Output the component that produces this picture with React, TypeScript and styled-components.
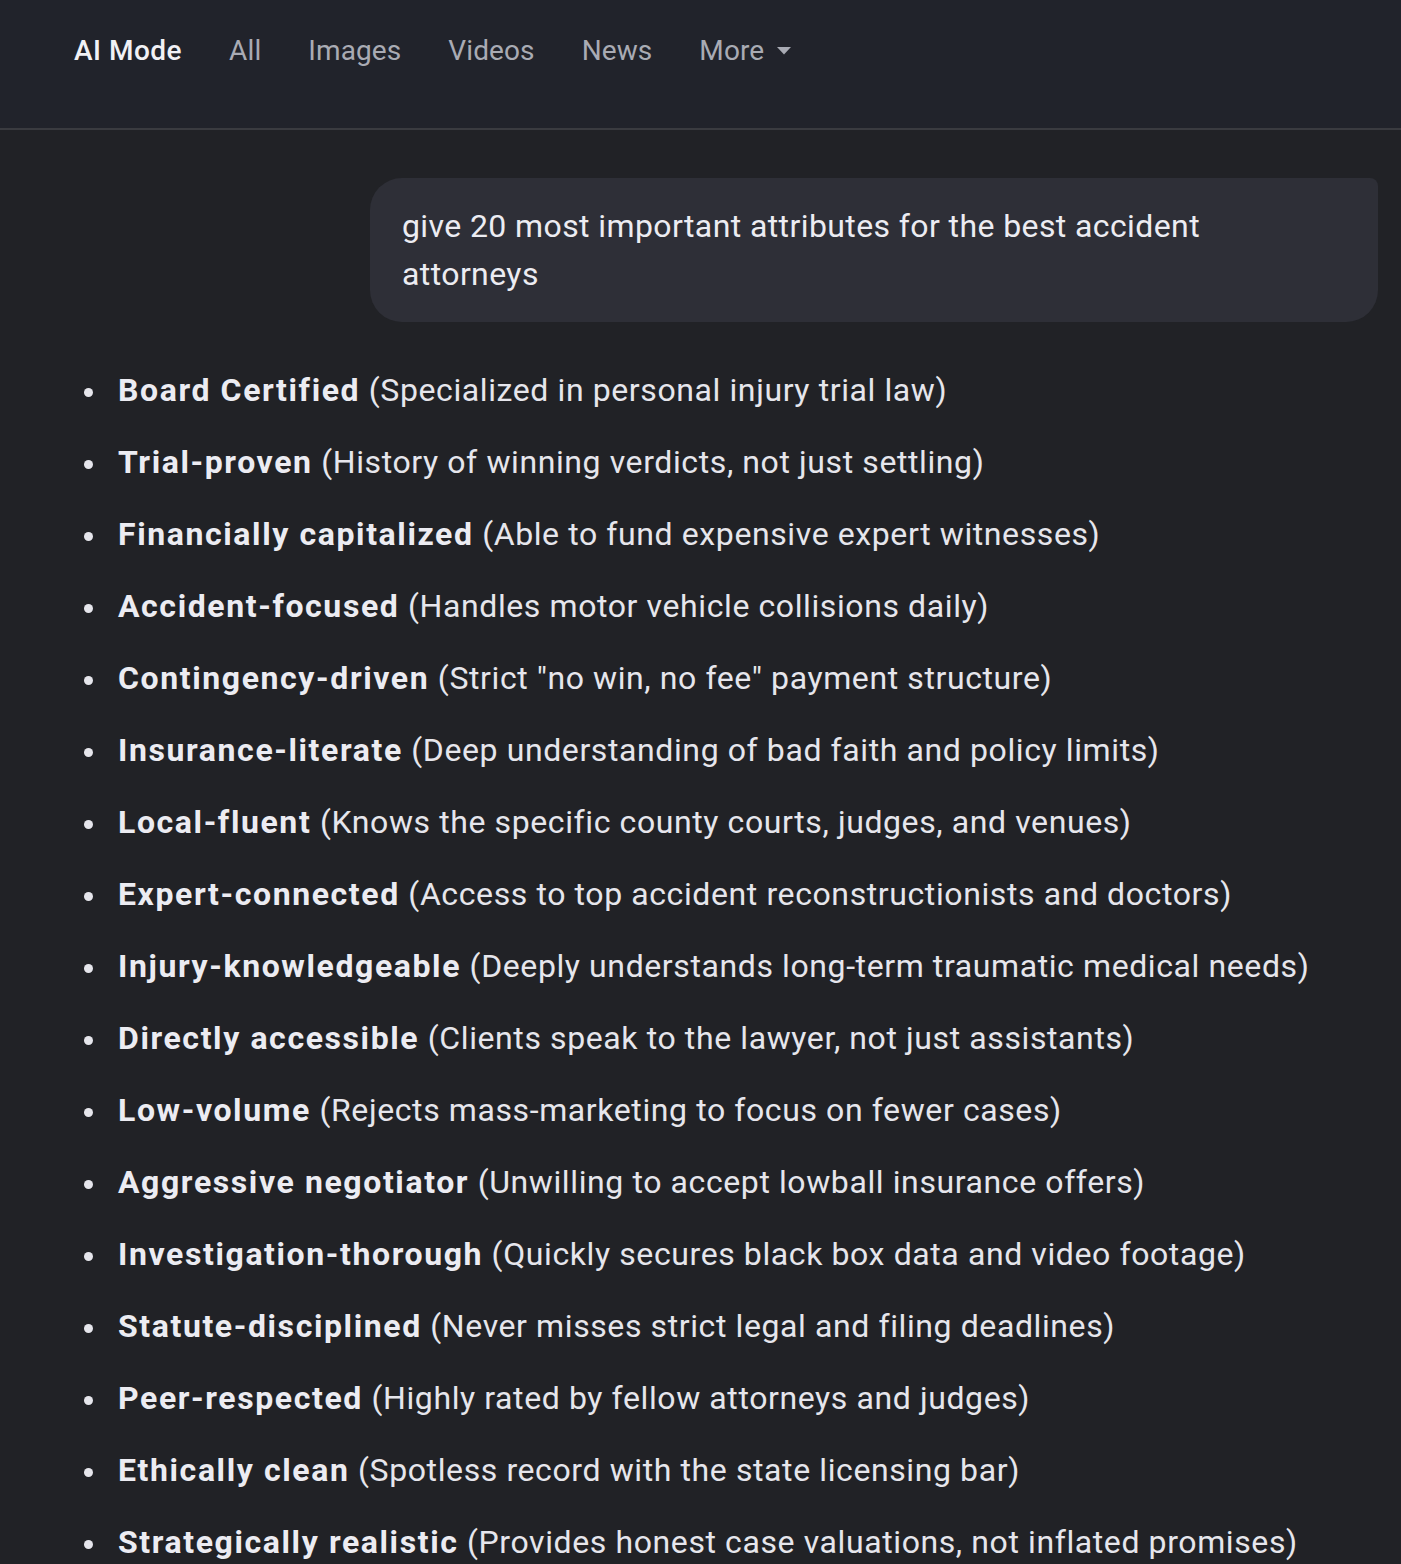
import React from "react";
import styled, { createGlobalStyle } from "styled-components";

const Global = createGlobalStyle`
  html, body {
    margin: 0;
    padding: 0;
    background: #212226;
  }
  body {
    font-family: Roboto, "Noto Sans", Arial, sans-serif;
    -webkit-font-smoothing: antialiased;
  }
`;

const Page = styled.div`
  height: 1564px;
  background: #212226;
  overflow: hidden;
`;

const Header = styled.header`
  height: 130px;
  background: #21232b;
  border-bottom: 2px solid #3a3b40;
  display: flex;
  align-items: flex-start;
  padding: 32px 0 0 74px;
  box-sizing: border-box;
  gap: 47px;
`;

const Tab = styled.a<{ $active?: boolean }>`
  font-family: Roboto, Arial, sans-serif;
  font-size: 28px;
  line-height: 38px;
  font-weight: ${(p) => (p.$active ? 500 : 400)};
  color: ${(p) => (p.$active ? "#f1f1f5" : "#a9abb4")};
  text-decoration: none;
  display: flex;
  align-items: center;
  gap: 13px;
  letter-spacing: ${(p) => (p.$active ? "0.5px" : "0.1px")};
`;

const Caret = styled.svg`
  width: 14px;
  height: 8px;
  fill: #a9abb4;
`;

const Content = styled.main`
  padding: 48px 23px 0 0;
`;

const BubbleRow = styled.div`
  display: flex;
  justify-content: flex-end;
`;

const Bubble = styled.div`
  width: 1008px;
  box-sizing: border-box;
  background: #2e2f37;
  border-radius: 32px 8px 32px 32px;
  padding: 24px 32px;
  color: #ececf2;
  font-family: Roboto, Arial, sans-serif;
  font-size: 32px;
  line-height: 48px;
  letter-spacing: 0.4px;
`;

const List = styled.ul`
  margin: 44px 0 0 0;
  padding: 0 0 0 118px;
  list-style: none;
  color: #e6e6ec;
  font-family: Roboto, Arial, sans-serif;
  font-size: 32px;
  line-height: 48px;
`;

const Item = styled.li`
  margin-bottom: 24px;
  white-space: nowrap;
  letter-spacing: 0.6px;
  &::before {
    content: "";
    display: inline-block;
    width: 9px;
    height: 9px;
    border-radius: 50%;
    background: #e6e6ec;
    margin-left: -34px;
    margin-right: 25px;
    vertical-align: middle;
  }
`;

const Term = styled.strong`
  font-weight: 700;
  color: #ececf2;
  letter-spacing: 1.6px;
`;

const attributes: [string, string][] = [
  ["Board Certified", "Specialized in personal injury trial law"],
  ["Trial-proven", "History of winning verdicts, not just settling"],
  ["Financially capitalized", "Able to fund expensive expert witnesses"],
  ["Accident-focused", "Handles motor vehicle collisions daily"],
  ["Contingency-driven", 'Strict "no win, no fee" payment structure'],
  ["Insurance-literate", "Deep understanding of bad faith and policy limits"],
  ["Local-fluent", "Knows the specific county courts, judges, and venues"],
  ["Expert-connected", "Access to top accident reconstructionists and doctors"],
  ["Injury-knowledgeable", "Deeply understands long-term traumatic medical needs"],
  ["Directly accessible", "Clients speak to the lawyer, not just assistants"],
  ["Low-volume", "Rejects mass-marketing to focus on fewer cases"],
  ["Aggressive negotiator", "Unwilling to accept lowball insurance offers"],
  ["Investigation-thorough", "Quickly secures black box data and video footage"],
  ["Statute-disciplined", "Never misses strict legal and filing deadlines"],
  ["Peer-respected", "Highly rated by fellow attorneys and judges"],
  ["Ethically clean", "Spotless record with the state licensing bar"],
  ["Strategically realistic", "Provides honest case valuations, not inflated promises"],
];

export default function App() {
  return (
    <Page>
      <Global />
      <Header>
        <Tab $active>AI Mode</Tab>
        <Tab>All</Tab>
        <Tab>Images</Tab>
        <Tab>Videos</Tab>
        <Tab>News</Tab>
        <Tab>
          More
          <Caret viewBox="0 0 14 8">
            <path d="M0 0h14L7 7.5z" />
          </Caret>
        </Tab>
      </Header>
      <Content>
        <BubbleRow>
          <Bubble>
            give 20 most important attributes for the best accident
            <br />
            attorneys
          </Bubble>
        </BubbleRow>
        <List>
          {attributes.map(([term, desc]) => (
            <Item key={term}>
              <Term>{term}</Term> ({desc})
            </Item>
          ))}
        </List>
      </Content>
    </Page>
  );
}
